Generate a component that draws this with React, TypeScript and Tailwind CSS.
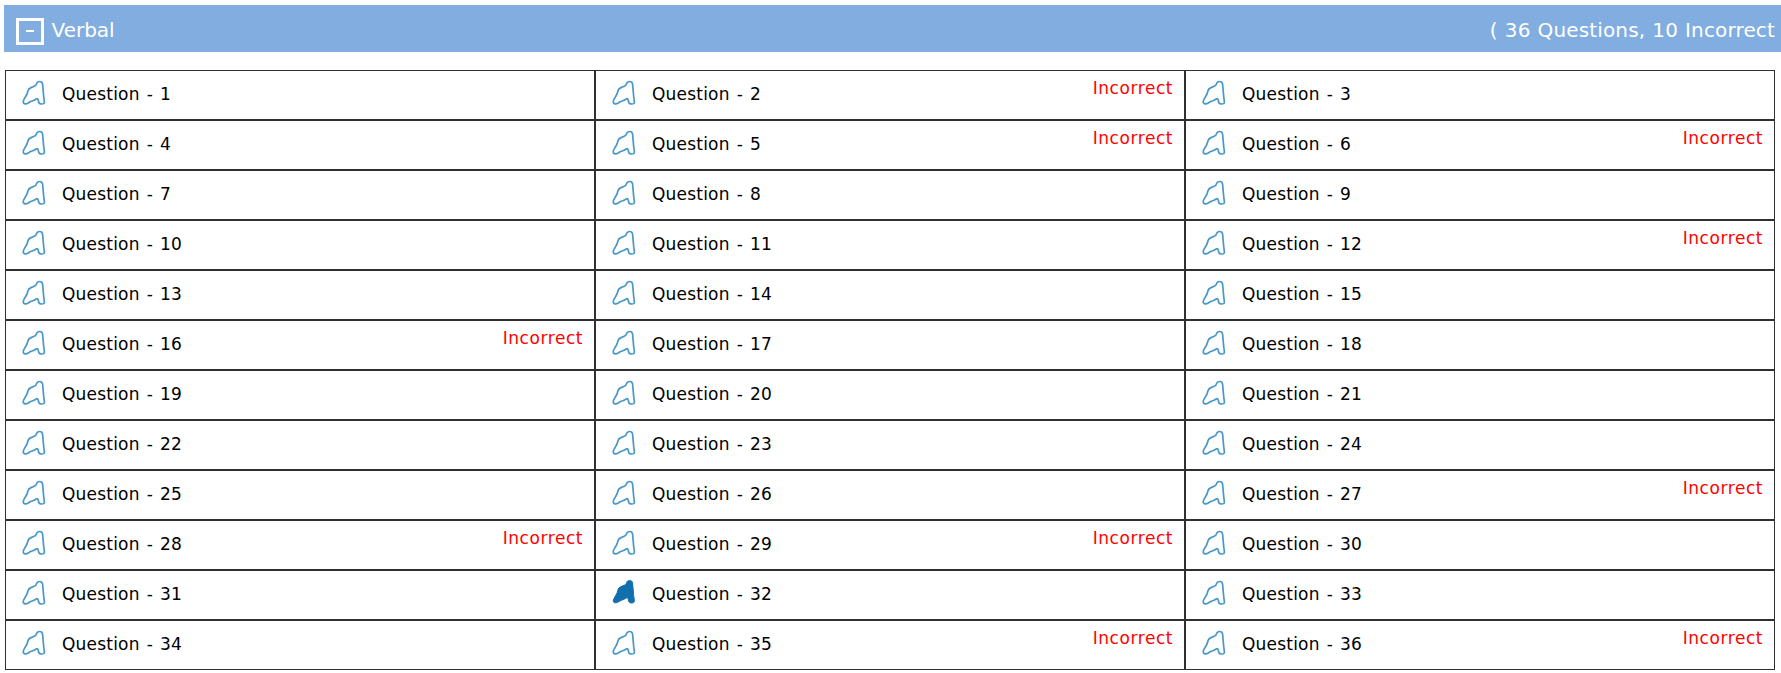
import React from 'react';

interface Question {
  id: number;
  incorrect: boolean;
  marked: boolean;
}

const incorrectIds = [2, 5, 6, 12, 16, 27, 28, 29, 35, 36];
const markedIds = [32];

const questions: Question[] = Array.from({ length: 36 }, (_, index) => ({
  id: index + 1,
  incorrect: incorrectIds.includes(index + 1),
  marked: markedIds.includes(index + 1),
}));

const FlagIcon: React.FC<{ filled: boolean }> = ({ filled }) => (
  <svg
    viewBox="0 0 24 26"
    className={
      filled
        ? 'w-6 h-[26px] -mt-px shrink-0 fill-[#1070ae] stroke-[#1070ae] stroke-1'
        : 'w-6 h-[26px] shrink-0 fill-none stroke-[#4a98c8] stroke-[1.7]'
    }
    strokeLinejoin="round"
  >
    <path d="M17.6 1.5C16 1.5 15 2.3 14.6 3.6C14.2 5.2 13.6 5.8 12.2 6.3L9 7.6C7.2 8.3 6.2 9.6 5.8 11.2C5.5 12.8 5.4 13.6 4.5 15L2 19.4C1.2 20.8 1 22 1.6 23C2.2 24 3.4 24 4.8 23.6C6.6 23.2 7.2 22 9 21.4C11.2 20.6 12.8 20.2 14.2 19C15.6 18 16.2 19.4 16.4 20.8C16.6 22.8 17.2 23.7 18.8 23.9C21.2 24.2 22.6 23.6 22.4 21.6C22.1 19.4 21.7 17.4 21.5 14.4L20.6 4.2C20.4 2.4 19.4 1.5 17.6 1.5Z" />
  </svg>
);

export default function App() {
  return (
    <div className="w-full h-[673px] overflow-hidden bg-white pt-[5px] font-['DejaVu_Sans',sans-serif]">
      {/* Section header */}
      <div className="ml-1 h-[47px] flex items-center bg-[#81ade0] pl-3 pr-[6px] text-xl text-white">
        <div className="w-7 h-[27px] mt-1.5 flex items-center justify-center border-3 border-white">
          <span className="w-2 h-0.5 -mt-0.5 bg-white" />
        </div>
        <span className="ml-[7.5px] mt-0.5">Verbal</span>
        <span className="ml-auto mt-0.5 tracking-[0.15px] [word-spacing:0.5px]">( 36 Questions, 10 Incorrect</span>
      </div>

      {/* Question grid */}
      <div className="mt-[18px] ml-[5px] w-[1770px] grid grid-cols-3">
        {questions.map((question) => (
          <div key={question.id} className="h-[50px] flex items-start border border-[#303030] pl-4 pr-[11px]">
            <div className="mt-[9px]">
              <FlagIcon filled={question.marked} />
            </div>
            <span className="ml-4 mt-[11px] text-[17px] leading-6 tracking-[0.2px] [word-spacing:1.4px] text-black">
              Question - {question.id}
            </span>
            {question.incorrect && (
              <span className="ml-auto mt-[5px] text-[17px] leading-6 tracking-[0.55px] text-[#ff0000]">Incorrect</span>
            )}
          </div>
        ))}
      </div>
    </div>
  );
}
